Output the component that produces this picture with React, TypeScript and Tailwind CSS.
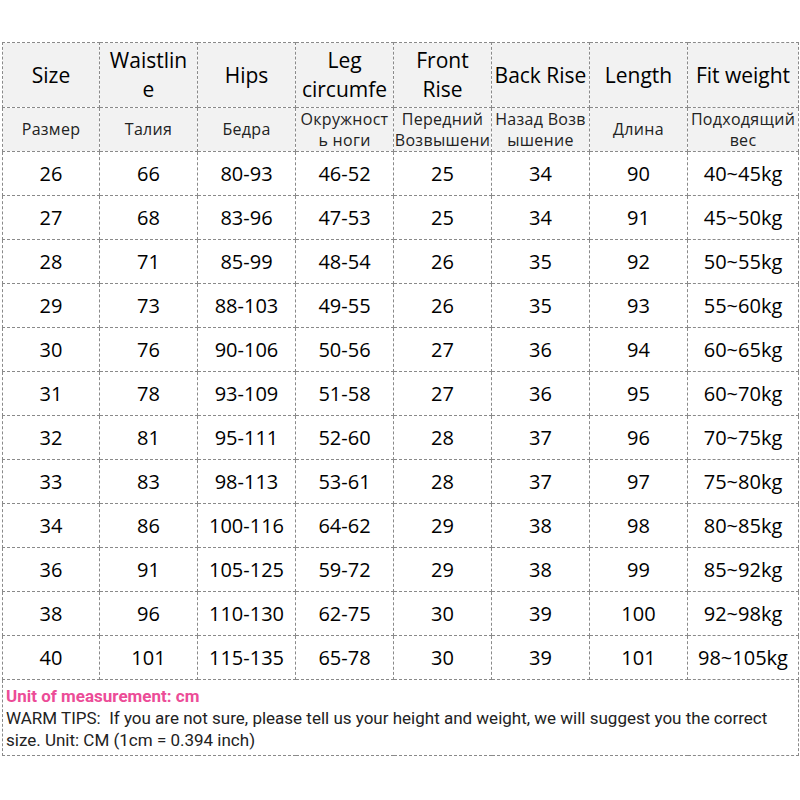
import React from "react";

// header lines are split the way the source picture cuts them
const heads: string[][] = [
  ["Size"],
  ["Waistlin", "e"],
  ["Hips"],
  ["Leg", "circumfe"],
  ["Front", "Rise"],
  ["Back Rise"],
  ["Length"],
  ["Fit weight"],
];
const subs: string[][] = [
  ["Размер"],
  ["Талия"],
  ["Бедра"],
  ["Окружност", "ь ноги"],
  ["Передний", "Возвышени"],
  ["Назад Возв", "ышение"],
  ["Длина"],
  ["Подходящий", "вес"],
];

const rows: string[][] = [
  ["26", "66", "80-93", "46-52", "25", "34", "90", "40~45kg"],
  ["27", "68", "83-96", "47-53", "25", "34", "91", "45~50kg"],
  ["28", "71", "85-99", "48-54", "26", "35", "92", "50~55kg"],
  ["29", "73", "88-103", "49-55", "26", "35", "93", "55~60kg"],
  ["30", "76", "90-106", "50-56", "27", "36", "94", "60~65kg"],
  ["31", "78", "93-109", "51-58", "27", "36", "95", "60~70kg"],
  ["32", "81", "95-111", "52-60", "28", "37", "96", "70~75kg"],
  ["33", "83", "98-113", "53-61", "28", "37", "97", "75~80kg"],
  ["34", "86", "100-116", "64-62", "29", "38", "98", "80~85kg"],
  ["36", "91", "105-125", "59-72", "29", "38", "99", "85~92kg"],
  ["38", "96", "110-130", "62-75", "30", "39", "100", "92~98kg"],
  ["40", "101", "115-135", "65-78", "30", "39", "101", "98~105kg"],
];

const cell = "border border-dashed border-[#8a8a8a] text-center align-middle p-0 whitespace-nowrap overflow-hidden";

export default function App() {
  return (
    <div className="w-[800px] h-[800px] bg-white pt-[42px] pl-[2px]">
      <table
        className="table-fixed border-collapse w-[796px] text-black"
        style={{ fontFamily: '"Open Sans", "Noto Sans", "Noto Sans CJK SC", sans-serif' }}
      >
        <colgroup>
          <col className="w-[97px]" />
          <col className="w-[98px]" />
          <col className="w-[98px]" />
          <col className="w-[98px]" />
          <col className="w-[98px]" />
          <col className="w-[98px]" />
          <col className="w-[98px]" />
          <col className="w-[111px]" />
        </colgroup>
        <thead>
          <tr className="h-[65px] bg-[#f2f2f2]">
            {heads.map((h) => (
              <th key={h.join()} className={`${cell} text-[21px] leading-[29px] font-normal`}>
                {h.map((l) => (
                  <div key={l}>{l}</div>
                ))}
              </th>
            ))}
          </tr>
          <tr className="h-[44px] bg-[#f2f2f2]">
            {subs.map((s) => (
              <th key={s.join()} className={`${cell} text-[16px] leading-[21px] font-normal tracking-[0.3px] text-[#222]`}>
                {s.map((l) => (
                  <div key={l}>{l}</div>
                ))}
              </th>
            ))}
          </tr>
        </thead>
        <tbody>
          {rows.map((r) => (
            <tr key={r[0]} className="h-[44px]">
              {r.map((v, i) => (
                <td key={i} className={`${cell} text-[20px]`}>
                  {v}
                </td>
              ))}
            </tr>
          ))}
          <tr className="h-[76px]">
            <td
              colSpan={8}
              className="border border-dashed border-[#8a8a8a] align-top text-left pl-[3px] pt-[5px]"
              style={{ fontFamily: '"Roboto", "Liberation Sans", sans-serif' }}
            >
              <div className="text-[17px] leading-[22px] font-bold text-[#ec4c97]">Unit of measurement: cm</div>
              <div className="text-[17px] leading-[22px] text-[#222]">
                WARM TIPS:&nbsp; If you are not sure, please tell us your height and weight, we will suggest you the correct
                <br />
                size. Unit: CM (1cm = 0.394 inch)
              </div>
            </td>
          </tr>
        </tbody>
      </table>
    </div>
  );
}
